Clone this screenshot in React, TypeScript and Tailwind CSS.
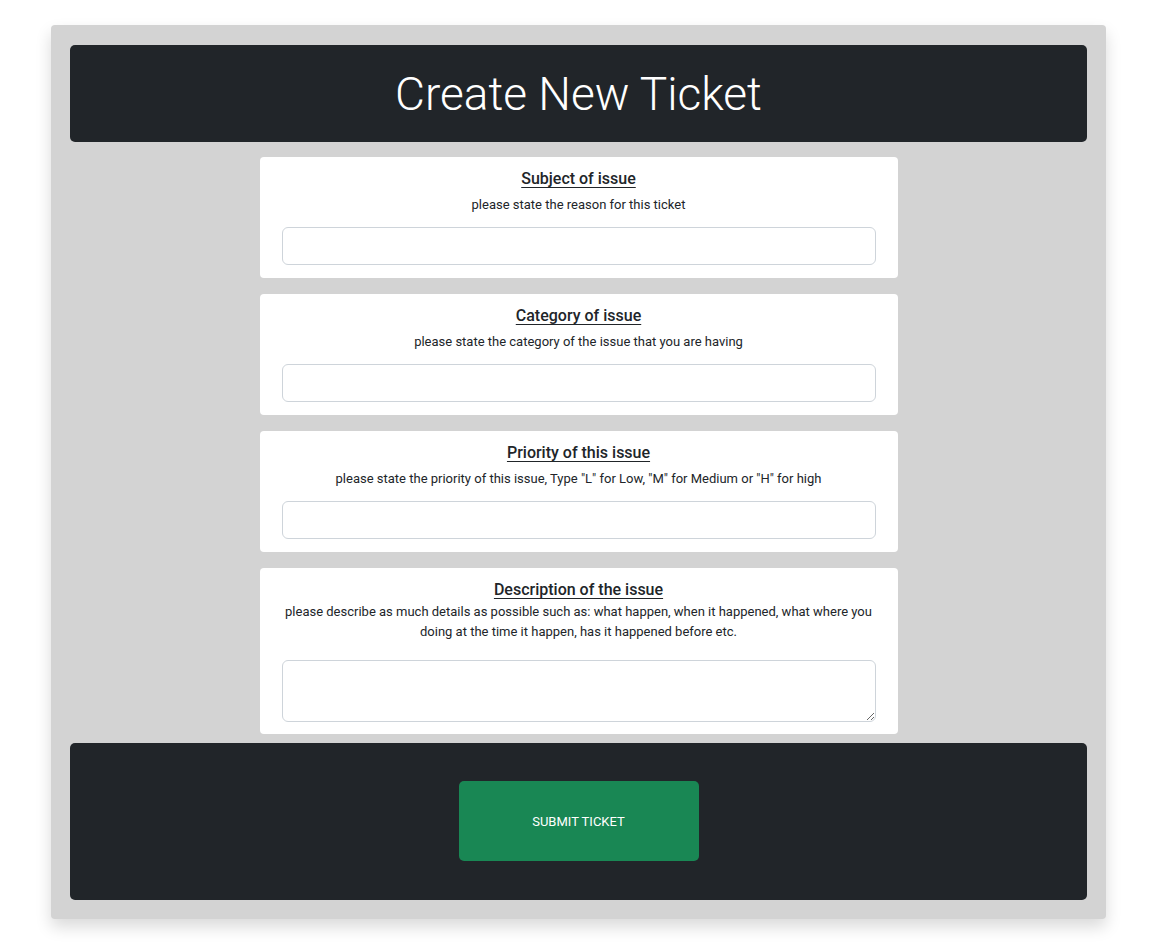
import React from "react";

const Card = ({
  title,
  sub,
  textarea,
}: {
  title: string;
  sub: React.ReactNode;
  textarea?: boolean;
}) => (
  <div
    className={
      textarea
        ? "w-[638px] bg-white rounded-[4px] px-[22px] pt-[10px] pb-[12px] flex flex-col items-center text-[#212529]"
        : "w-[638px] bg-white rounded-[4px] px-[22px] pt-[10px] pb-[13px] flex flex-col items-center text-[#212529]"
    }
  >
    <div className="text-[16px] leading-[24px] font-medium underline underline-offset-[3px]">{title}</div>
    {textarea ? (
      <div className="text-[13px] leading-[20px] text-center">{sub}</div>
    ) : (
      <div className="text-[13px] leading-[20px] mt-[4px] text-center">{sub}</div>
    )}
    {textarea ? (
      <textarea className="mt-[18px] w-full h-[62px] border border-[#ced4da] rounded-[6px] block resize-y outline-none" />
    ) : (
      <input className="mt-[12px] w-full h-[38px] border border-[#ced4da] rounded-[6px] block outline-none" />
    )}
  </div>
);

export default function App() {
  return (
    <div className="min-h-[942px] bg-white pt-[25px] pl-[51px]" style={{ fontFamily: "Roboto, 'Noto Sans', sans-serif" }}>
      <div className="w-[1055px] bg-[#d3d3d3] rounded-[4px] shadow-[0_8px_16px_rgba(0,0,0,0.15)] px-[19px] pt-[20px] pb-[19px] flex flex-col items-center">
        <div className="w-full h-[97px] bg-[#212529] rounded-[5px] flex items-center justify-center">
          <h1 className="text-white text-[46px] font-light leading-none">Create New Ticket</h1>
        </div>
        <div className="mt-[15px] flex flex-col gap-[16px] items-center">
          <Card title="Subject of issue" sub="please state the reason for this ticket" />
          <Card title="Category of issue" sub="please state the category of the issue that you are having" />
          <Card
            title="Priority of this issue"
            sub={'please state the priority of this issue, Type "L" for Low, "M" for Medium or "H" for high'}
          />
          <Card
            title="Description of the issue"
            textarea
            sub={
              <>
                please describe as much details as possible such as: what happen, when it happened, what where you
                <br />
                doing at the time it happen, has it happened before etc.
              </>
            }
          />
        </div>
        <div className="mt-[9px] w-full bg-[#212529] rounded-[5px] flex justify-center pt-[38px] pb-[39px]">
          <button className="w-[240px] h-[80px] bg-[#198754] rounded-[5px] text-white text-[13px] uppercase pt-[2px]">
            Submit Ticket
          </button>
        </div>
      </div>
    </div>
  );
}
